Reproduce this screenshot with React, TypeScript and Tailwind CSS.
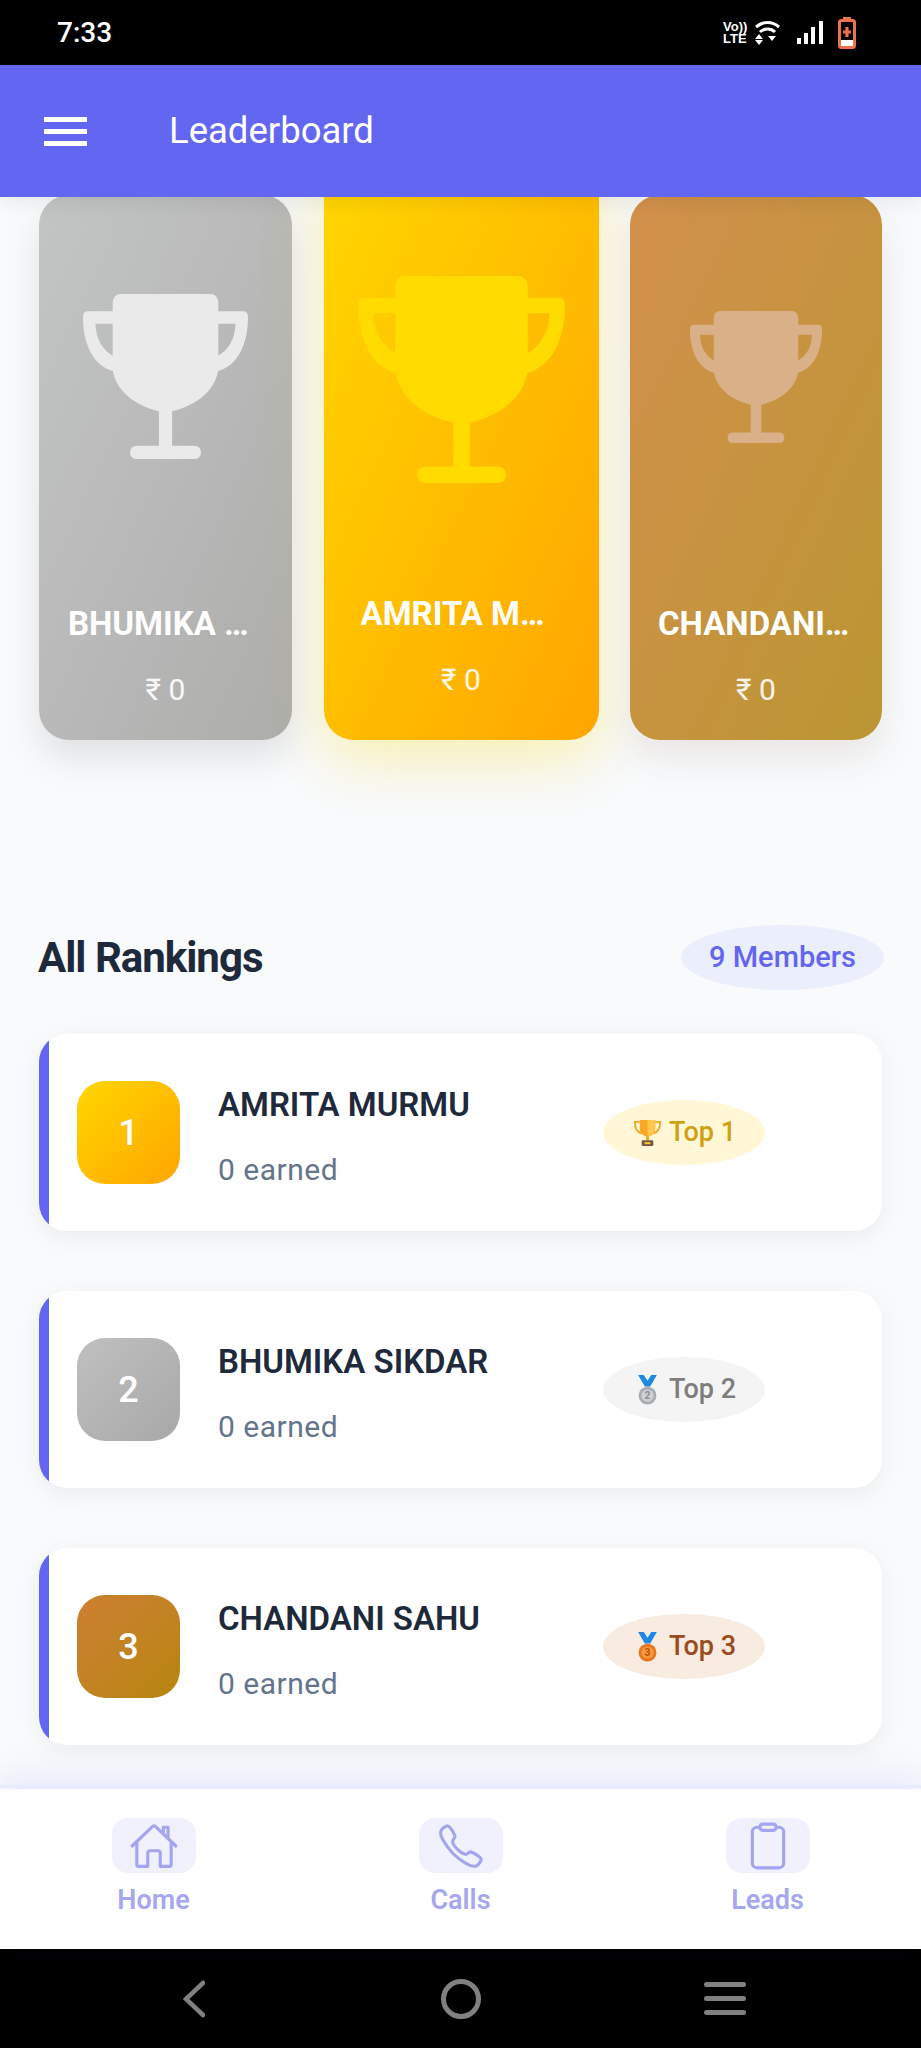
import React from 'react';
import { IoHomeOutline, IoCallOutline, IoClipboardOutline } from 'react-icons/io5';

const TROPHY_BODY =
  'M23 0H77Q82 0 82 6V46C80 58 70 67 54 71V92H67Q71.5 92 71.5 96T67 100H33Q28.5 100 28.5 96T33 92H46V71C30 67 20 58 18 46V6Q18 0 23 0Z';
const TROPHY_LEFT = 'M19 10.5H3Q0 10.5 0 14C0 30 6 44 19 47V38C12 34 8 28 7.5 18H19Z';
const TROPHY_RIGHT = 'M81 10.5H97Q100 10.5 100 14C100 30 94 44 81 47V38C88 34 92 28 92.5 18H81Z';

const Trophy = ({ className }: { className: string }) => (
  <svg viewBox="0 0 100 100" className={className} fill="currentColor">
    <path d={TROPHY_BODY} />
    <path d={TROPHY_LEFT} />
    <path d={TROPHY_RIGHT} />
  </svg>
);

const SmallTrophy = () => (
  <svg viewBox="0 0 32 32" className="w-[31px] h-[31px] shrink-0">
    <path d="M8 5H3c0 7 2 11 7 12M24 5h5c0 7-2 11-7 12" fill="none" stroke="#f5a623" strokeWidth="2" />
    <path d="M8 3h16v8c0 6-4 9-8 9s-8-3-8-9z" fill="#f9a825" />
    <path d="M16 3h8v8c0 6-4 9-8 9z" fill="#ffc84a" />
    <rect x="14.5" y="19" width="3" height="5" fill="#f5a623" />
    <rect x="10" y="24" width="12" height="6" rx="1" fill="#795548" />
    <rect x="13" y="26" width="6" height="2" fill="#ffca28" />
  </svg>
);

const Medal = ({ disc, edge, ink, num }: { disc: string; edge: string; ink: string; num: string }) => (
  <svg viewBox="0 0 20 32" className="w-[19px] h-[30px] shrink-0 ml-[6px] mr-[6px]">
    <path d="M0 0h6l4 6 4-6h6l-7 12H7z" fill="#1e88e5" />
    <path d="M7 12h6l-1 3H8z" fill="#90a4ae" />
    <circle cx="10" cy="22" r="9.5" fill={edge} />
    <circle cx="10" cy="22" r="6.5" fill={disc} />
    <text x="10" y="26" textAnchor="middle" fontSize="11" fontWeight="700" fill={ink}>{num}</text>
  </svg>
);

const podium = [
  {
    name: 'BHUMIKA SIKDAR',
    card: 'w-[253px] h-[545px] pb-[30px] bg-gradient-to-br from-[#c3c5c5] to-[#adadab] shadow-[0_18px_36px_rgba(0,0,0,0.1)]',
    trophy: 'w-[165px] h-[165px] top-[99px] text-[#eaeaea]',
    nameWidth: 'w-[195px]',
  },
  {
    name: 'AMRITA MURMU',
    card: 'w-[275px] h-[590px] pb-[40px] bg-gradient-to-br from-[#ffd700] to-[#ffa500] shadow-[0_20px_60px_rgba(255,215,0,0.3)]',
    trophy: 'w-[207px] h-[207px] top-[126px] text-[#ffdb00]',
    nameWidth: 'w-[201px]',
  },
  {
    name: 'CHANDANI SAHU',
    card: 'w-[252px] h-[545px] pb-[30px] bg-gradient-to-br from-[#d2904c] to-[#bb9632] shadow-[0_18px_36px_rgba(120,60,20,0.1)]',
    trophy: 'w-[132px] h-[132px] top-[116px] text-[#d9b088]',
    nameWidth: 'w-[196px]',
  },
];

const rankings = [
  {
    rank: 1,
    name: 'AMRITA MURMU',
    box: 'from-[#ffd700] to-[#ffa500]',
    pill: 'bg-[#fff7d6] text-[#d0a012]',
    label: 'Top 1',
    icon: <SmallTrophy />,
  },
  {
    rank: 2,
    name: 'BHUMIKA SIKDAR',
    box: 'from-[#c0c0c0] to-[#a8a8a8]',
    pill: 'bg-[#f4f4f4] text-[#7d7d7d]',
    label: 'Top 2',
    icon: <Medal disc="#cfd2d4" edge="#a9adb0" ink="#8a8f93" num="2" />,
  },
  {
    rank: 3,
    name: 'CHANDANI SAHU',
    box: 'from-[#cd7f32] to-[#b8860b]',
    pill: 'bg-[#f8ebe0] text-[#9a4a1c]',
    label: 'Top 3',
    icon: <Medal disc="#f59a3c" edge="#e8761c" ink="#b5500f" num="3" />,
  },
];

const tabs = [
  { label: 'Home', Icon: IoHomeOutline },
  { label: 'Calls', Icon: IoCallOutline },
  { label: 'Leads', Icon: IoClipboardOutline },
];

export default function App() {
  return (
    <div className="w-[921px] h-[2048px] flex flex-col overflow-hidden bg-[#f8fafc] font-['Roboto',sans-serif]">
      {/* Status bar */}
      <div className="h-[65px] shrink-0 bg-black flex items-center justify-between pl-[57px] pr-[65px] text-white">
        <span className="text-[28px] font-medium leading-none">7:33</span>
        <div className="flex items-center">
          <div className="flex flex-col items-start text-[13px] font-bold leading-[12px] font-['Liberation_Sans',sans-serif] w-[31px]">
            <span>Vo))</span>
            <span>LTE</span>
          </div>
          <svg viewBox="0 0 27 24" className="w-[27px] h-[24px]" fill="none" stroke="#fff" strokeWidth="3">
            <path d="M2 6C9 0 18 0 25 6" />
            <path d="M6 11C10 7 17 7 21 11" />
            <path d="M14 15h8l-4 5z" fill="#fff" stroke="none" />
            <path d="M5 13l-4 5h8zM5 24l-4-5h8z" fill="#fff" stroke="none" />
          </svg>
          <svg viewBox="0 0 26 23" className="w-[26px] h-[23px] ml-[16px]" fill="#fff">
            <rect x="0" y="17" width="4" height="6" />
            <rect x="7" y="12" width="4" height="11" />
            <rect x="14" y="6" width="4" height="17" />
            <rect x="22" y="0" width="4" height="23" />
          </svg>
          <svg viewBox="0 0 18 32" className="w-[18px] h-[32px] ml-[15px]">
            <rect x="5" y="0" width="8" height="4" fill="#f0704a" />
            <rect x="1.5" y="3.5" width="15" height="27" rx="2" fill="#000" stroke="#f0704a" strokeWidth="3" />
            <rect x="3" y="23" width="12" height="6" fill="#fff" />
            <path d="M9 10v10M5 15h8" stroke="#f0704a" strokeWidth="3" />
          </svg>
        </div>
      </div>

      {/* Header */}
      <div className="relative z-10 h-[132px] shrink-0 bg-[#6366f1] flex items-center pl-[44px] shadow-[0_4px_20px_rgba(0,0,0,0.08)]">
        <div className="w-[43px] flex flex-col gap-[7px]">
          <div className="h-[5px] bg-white" />
          <div className="h-[5px] bg-white" />
          <div className="h-[5px] bg-white" />
        </div>
        <span className="ml-[82px] text-[36.5px] text-white leading-none">Leaderboard</span>
      </div>

      {/* Scrolled content */}
      <div className="flex-1 min-h-0 overflow-hidden">
        <div className="flex items-end justify-between h-[543px] pl-[39px] pr-[39px]">
          {podium.map((p) => (
            <div key={p.name} className={`relative shrink-0 rounded-[30px] flex flex-col items-center justify-end ${p.card}`}>
              <Trophy className={`absolute ${p.trophy}`} />
              <div className={`text-white font-bold text-[33px] leading-[40px] truncate ${p.nameWidth}`}>{p.name}</div>
              <div className="mt-[26px] text-white/90 text-[30px] leading-[40px]">₹ 0</div>
            </div>
          ))}
        </div>

        <div className="mt-[185px] px-[39px] flex items-center justify-between">
          <h2 className="text-[42px] font-bold text-[#1e293b] leading-none tracking-[-1px] -ml-[1px]">All Rankings</h2>
          <div className="w-[203px] h-[65px] -mr-[2px] rounded-[50%] bg-[#ebeefb] text-[#6366f1] text-[29px] font-medium flex items-center justify-center">
            9 Members
          </div>
        </div>

        <div className="mt-[44px] px-[39px] flex flex-col gap-[60px]">
          {rankings.map((r) => (
            <div
              key={r.rank}
              className="h-[197px] bg-white rounded-[28px] overflow-hidden flex items-center shadow-[0_6px_24px_rgba(0,0,0,0.06)]"
            >
              <div className="w-[10px] self-stretch shrink-0 bg-[#6366f1]" />
              <div className={`ml-[28px] w-[103px] h-[103px] shrink-0 rounded-[28px] bg-gradient-to-br ${r.box} flex items-center justify-center text-white text-[36px] font-medium`}>
                {r.rank}
              </div>
              <div className="w-[423px] shrink-0 pl-[38px] pt-[10px] flex flex-col">
                <div className="text-[33px] font-semibold text-[#1e293b] leading-[40px]">{r.name}</div>
                <div className="mt-[25px] text-[30px] text-[#64748b] leading-[40px] tracking-[0.5px]">0 earned</div>
              </div>
              <div className={`w-[162px] h-[65px] shrink-0 rounded-[50%] flex items-center justify-center gap-[6px] text-[27px] font-medium ${r.pill}`}>
                {r.icon}
                <span>{r.label}</span>
              </div>
            </div>
          ))}
        </div>
      </div>

      {/* Bottom tabs */}
      <div className="relative z-10 h-[164px] shrink-0 bg-white border-t-4 border-[#eaebfc] grid grid-cols-3 shadow-[0_-10px_30px_rgba(99,102,241,0.1)]">
        {tabs.map(({ label, Icon }) => (
          <div key={label} className="flex flex-col items-center pt-[29px]">
            <div className="w-[84px] h-[55px] rounded-[16px] bg-[#f0f1fd] flex items-center justify-center text-[#a3a5f0]">
              <Icon className="w-[50px] h-[50px]" />
            </div>
            <span className="mt-[10px] text-[27px] font-semibold leading-[34px] text-[#a5a8ee]">{label}</span>
          </div>
        ))}
      </div>

      {/* Android nav */}
      <div className="h-[99px] shrink-0 bg-black grid grid-cols-3 items-center">
        <div className="flex justify-end pr-[102px]">
          <svg viewBox="0 0 22 38" className="w-[22px] h-[38px]" fill="none" stroke="#808080" strokeWidth="4.5" strokeLinecap="round">
            <path d="M20 3L3 19L20 35" />
          </svg>
        </div>
        <div className="flex justify-center">
          <div className="w-[40px] h-[40px] rounded-full border-[5px] border-[#808080]" />
        </div>
        <div className="flex justify-start pl-[90px]">
          <div className="w-[42px] flex flex-col gap-[9px]">
            <div className="h-[5px] rounded-full bg-[#808080]" />
            <div className="h-[5px] rounded-full bg-[#808080]" />
            <div className="h-[5px] rounded-full bg-[#808080]" />
          </div>
        </div>
      </div>
    </div>
  );
}
